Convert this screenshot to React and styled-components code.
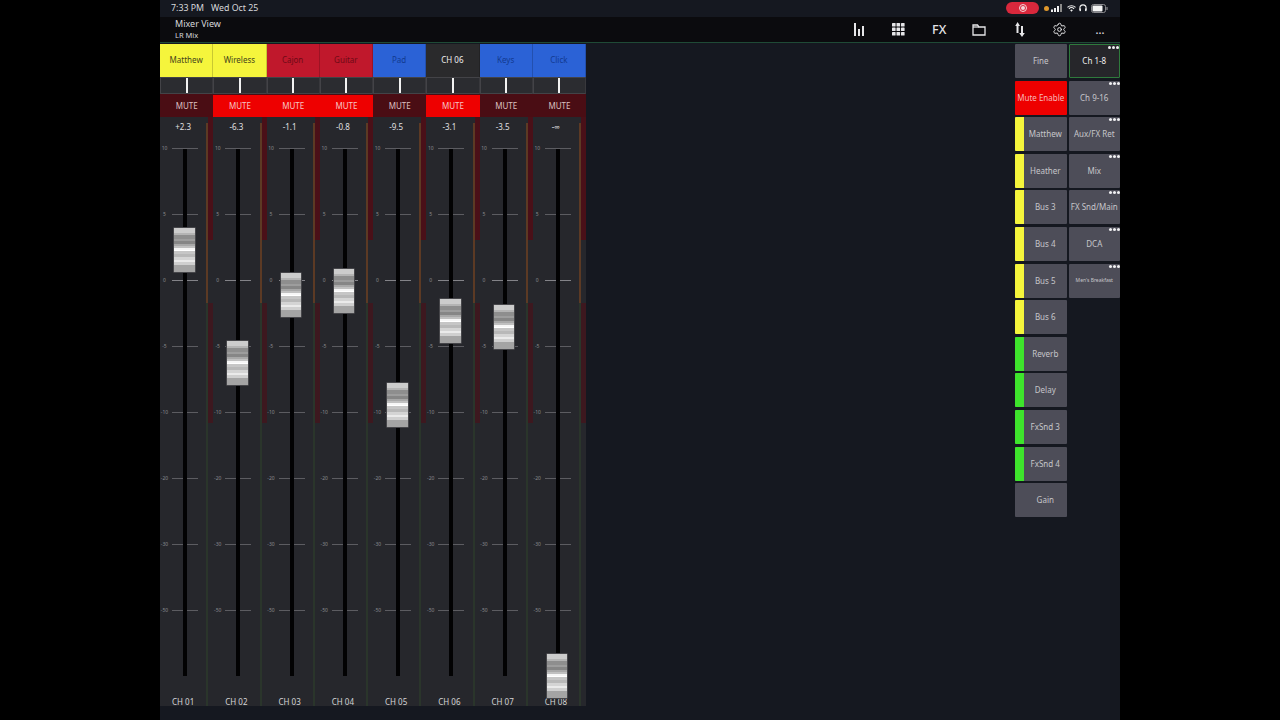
import React from "react";
import styled, { createGlobalStyle } from "styled-components";
import { Settings } from "lucide-react";

const Global = createGlobalStyle`
  html, body { margin: 0; padding: 0; background: #000; }
  #root { width: 1280px; height: 720px; overflow: hidden; }
  * { box-sizing: border-box; }
`;

const Page = styled.div`
  width: 1280px; height: 720px; display: flex; justify-content: center;
  background: #000; font-family: "Noto Sans", "Open Sans", sans-serif;
`;
const Tablet = styled.div`
  width: 960px; height: 720px; display: flex; flex-direction: column; background: #151820;
`;
const StatusBar = styled.div`
  height: 17px; flex: none; display: flex; align-items: center; justify-content: space-between;
  padding: 0 12px 1px 11px; background: #151820; color: #d8d8dc; font-size: 8.8px; font-family: "Noto Sans", sans-serif;
`;
const Clock = styled.div`display: flex; gap: 7px;`;
const StatusIcons = styled.div`display: flex; align-items: center;`;
const RecordPill = styled.div`
  width: 33px; height: 12px; border-radius: 6px; background: #d9283c; display: flex;
  align-items: center; justify-content: center; margin-right: 5px;
`;
const RecordDot = styled.div`
  width: 8px; height: 8px; border-radius: 50%; border: 1px solid #f6d6da; display: flex;
  align-items: center; justify-content: center;
  &::after { content: ""; width: 4px; height: 4px; border-radius: 50%; background: #f6d6da; }
`;
const OrangeDot = styled.div`width: 5px; height: 5px; border-radius: 50%; background: #e0982c; margin-right: 2px;`;
const Header = styled.div`
  height: 26px; flex: none; display: flex; align-items: center; background: #0b0b0e;
  border-bottom: 1px solid #1f4a36; position: relative;
`;
const Titles = styled.div`
  padding-left: 15px; width: 679px; color: #d6d6da; display: flex; flex-direction: column;
`;
const Title = styled.div`font-size: 9px; line-height: 12px; margin-top: -1px;`;
const SubTitle = styled.div`font-size: 7.5px; line-height: 10px;`;
const Tools = styled.div`display: flex; align-items: center; padding-left: 0.5px;`;
const Tool = styled.div`
  width: 40.2px; display: flex; align-items: center; justify-content: center; color: #e2e2e4;
  font-size: 12.5px; font-weight: 500; height: 24px;
`;
const Dots3 = styled(Tool)`font-size: 11px;`;
const Content = styled.div`
  flex: 1; min-height: 0; display: flex; justify-content: space-between; padding-top: 1px;
`;
const Strips = styled.div`width: 426px; height: 662px; display: flex;`;
const Strip = styled.div`flex: 1; min-width: 0; display: flex; flex-direction: column; background: #26272c;`;
const Name = styled.div`
  height: 33px; flex: none; display: flex; align-items: center; justify-content: center; padding-bottom: 2px;
  font-size: 8px; background: ${p => p.$bg}; color: ${p => p.$fg};
  border-right: 1px solid rgba(0,0,0,.18);
`;
const Pan = styled.div`
  height: 17px; flex: none; background: #2b2c30; border: 1px solid #434347; display: flex;
  justify-content: center; border-right-color: #38383c;
`;
const PanMark = styled.div`width: 2px; background: #f2f2f2;`;
const Spacer = styled.div`height: 1px; flex: none; background: #4a0d14;`;
const Mute = styled.div`
  height: 22px; flex: none; display: flex; align-items: center; justify-content: center; padding-bottom: 2px;
  font-size: 8px; background: ${p => p.$on ? "#ee0000" : "#4a0d14"};
  color: ${p => p.$on ? "#f6c4c4" : "#dcc0c0"};
`;
const Body = styled.div`flex: 1; min-height: 0; display: flex;`;
const Fader = styled.div`flex: 1; min-width: 0; position: relative; display: flex; flex-direction: column; align-items: stretch;`;
const Value = styled.div`
  height: 18px; flex: none; display: flex; align-items: center; justify-content: center;
  color: #e0e0e2; font-size: 8px;
`;
const Scale = styled.div`padding-top: 9px; flex: 1;`;
const TickRow = styled.div`height: 66px; display: flex; align-items: flex-start;`;
const TickLabel = styled.div`
  width: 12px; padding-right: 3px; text-align: center; font-size: 5px; line-height: 8px; color: #8a8a8f;
`;
const TickLine = styled.div`width: 26px; height: 1px; margin-top: 4px; background: ${p => p.$bright ? "#838388" : "#5c5c61"};`;
const Track = styled.div`
  position: absolute; top: 32px; left: 23px; width: 4px; height: 527px; background: #020203;
`;
const Knob = styled.div`
  position: absolute; left: 13px; width: 22.5px; height: 46px; border: 1px solid #46464a; border-radius: 1px;
  background: linear-gradient(180deg,
    #cccccc 0 11%, #b4b4b4 11% 16%, #8e8e8e 16% 24%, #9d9d9d 24% 30%, #868686 30% 36%, #a8a8a8 36% 42%,
    #c0c0c0 42% 46%, #f6f6f6 46% 50%, #ffffff 50% 53%, #c6c6c6 53% 60%, #b8b8b8 60% 66%, #d4d4d4 66% 72%,
    #eaeaea 72% 78%, #cfcfcf 78% 83%, #a4a4a4 83% 100%);
`;
const ChannelLabel = styled.div`
  height: 10px; flex: none; text-align: center; font-size: 8px; line-height: 12px; color: #d4d4d6;
`;
const MeterLeft = styled.div`
  width: 2px; flex: none; margin-top: 6px;
  background: linear-gradient(180deg, #5c3a24 0, #5c3a24 180px, #2a352b 180px, #2a352b 100%);
`;
const MeterRight = styled.div`
  width: 5px; flex: none;
  background: linear-gradient(180deg, #4a1018 0, #4a1018 123px, #26272c 123px, #26272c 186px, #3d181f 186px, #3d181f 306px, #26272c 306px);
`;
const Panel = styled.div`display: flex; gap: 2px; width: 105px;`;
const PanelColumn = styled.div`display: flex; flex-direction: column; gap: 2.6px; width: 52px;`;
const PanelButton = styled.div`
  height: 34px; flex: none; display: flex; position: relative; border-radius: 1px; overflow: hidden;
  background: ${p => p.$bg || "#4d4d58"}; color: ${p => p.$fg || "#c6c6ca"};
  border: ${p => p.$outline ? "1px solid #2f7a3c" : "none"};
`;
const Swatch = styled.div`width: 9px; flex: none; background: ${p => p.$color};`;
const ButtonLabel = styled.div`
  flex: 1; min-width: 0; display: flex; align-items: center; justify-content: center; white-space: nowrap; padding-bottom: 1px;
  font-size: ${p => p.$tiny ? "5px" : "8px"};
`;
const Dots = styled.div`position: absolute; top: 1px; right: 0; display: flex; gap: 1px;`;
const Dot = styled.div`width: 3px; height: 3px; border-radius: 50%; background: #f0f0f2;`;

const ticks = ["10", "5", "0", "-5", "-10", "-20", "-30", "-50"];
const strips = [
  { name: "Matthew", bg: "#f5f53c", fg: "#44441a", value: "+2.3", ch: "CH 01", mute: false, top: 110 },
  { name: "Wireless", bg: "#f5f53c", fg: "#44441a", value: "-6.3", ch: "CH 02", mute: true, top: 223 },
  { name: "Cajon", bg: "#c0182c", fg: "#6e0a16", value: "-1.1", ch: "CH 03", mute: true, top: 155 },
  { name: "Guitar", bg: "#c0182c", fg: "#6e0a16", value: "-0.8", ch: "CH 04", mute: true, top: 151 },
  { name: "Pad", bg: "#2b62d6", fg: "#123a90", value: "-9.5", ch: "CH 05", mute: false, top: 265 },
  { name: "CH 06", bg: "#2a2a2c", fg: "#eeeeee", value: "-3.1", ch: "CH 06", mute: true, top: 181 },
  { name: "Keys", bg: "#2b62d6", fg: "#123a90", value: "-3.5", ch: "CH 07", mute: false, top: 187 },
  { name: "Click", bg: "#2b62d6", fg: "#123a90", value: "-∞", ch: "CH 08", mute: false, top: 536 },
];
const Y = "#f5f53c", G = "#3ee42c";
const leftButtons = [
  { label: "Fine", plain: true }, { label: "Mute Enable", bg: "#ee0000", fg: "#f6b8b8", plain: true },
  { label: "Matthew", c: Y }, { label: "Heather", c: Y }, { label: "Bus 3", c: Y }, { label: "Bus 4", c: Y },
  { label: "Bus 5", c: Y }, { label: "Bus 6", c: Y }, { label: "Reverb", c: G }, { label: "Delay", c: G },
  { label: "FxSnd 3", c: G }, { label: "FxSnd 4", c: G }, { label: "Gain", c: "transparent" },
];
const rightButtons = [
  { label: "Ch 1-8", bg: "#26262a", fg: "#f0f0f0", outline: true }, { label: "Ch 9-16" }, { label: "Aux/FX Ret" },
  { label: "Mix" }, { label: "FX Snd/Main" }, { label: "DCA" }, { label: "Men's Breakfast", tiny: true },
];

const BarsIcon = () => (
  <svg width="12" height="13" viewBox="0 0 12 13" fill="#e6e6e8">
    <rect x="1" y="0" width="2" height="13" /><rect x="5" y="6" width="2" height="7" /><rect x="9" y="3" width="2" height="10" />
  </svg>
);
const GridIcon = () => (
  <svg width="13" height="13" viewBox="0 0 13 13" fill="#e6e6e8">
    {[0, 4.5, 9].flatMap(x => [0, 4.5, 9].map(y => <rect key={`${x}-${y}`} x={x} y={y} width="3.6" height="3.6" rx=".6" />))}
  </svg>
);
const FolderIcon = () => (
  <svg width="14" height="12" viewBox="0 0 14 12" fill="none" stroke="#e6e6e8" strokeWidth="1.3">
    <path d="M1 1h4.5l1.5 2h6v8H1z" /><path d="M1 3h6" />
  </svg>
);
const ArrowsIcon = () => (
  <svg width="10" height="15" viewBox="0 0 10 15" fill="#e6e6e8">
    <path d="M2.6 0 5 4H3.5v7h-2V4H.2zM6 4h2v7h1.8L7 15l-2.8-4H6z" />
  </svg>
);
const SignalIcon = () => (
  <svg width="11" height="8" viewBox="0 0 11 8" fill="#f0f0f0" style={{ marginRight: 5 }}>
    <rect x="0" y="5.5" width="2" height="2.5" /><rect x="3" y="4" width="2" height="4" /><rect x="6" y="2" width="2" height="6" /><rect x="9" y="0" width="2" height="8" fill="#8a8a8a" />
  </svg>
);
const WifiIcon = () => (
  <svg width="9" height="7" viewBox="0 0 11 8" fill="none" stroke="#f0f0f0" strokeWidth="1.3" style={{ marginRight: 3 }}>
    <path d="M.6 2.6a7 7 0 0 1 9.8 0M2.3 4.4a4.6 4.6 0 0 1 6.4 0" /><path d="M5.5 8 3.9 6a2.2 2.2 0 0 1 3.2 0z" fill="#f0f0f0" stroke="none" />
  </svg>
);
const PhonesIcon = () => (
  <svg width="8" height="8" viewBox="0 0 9 9" fill="none" stroke="#f0f0f0" strokeWidth="1.2" style={{ marginRight: 4 }}>
    <path d="M1 7V4.5a3.5 3.5 0 0 1 7 0V7" /><rect x=".6" y="5" width="1.6" height="3" fill="#f0f0f0" stroke="none" /><rect x="6.8" y="5" width="1.6" height="3" fill="#f0f0f0" stroke="none" />
  </svg>
);
const BatteryIcon = () => (
  <svg width="17" height="9" viewBox="0 0 17 9" fill="none">
    <rect x=".5" y=".5" width="14" height="8" rx="2" stroke="#8a8a8e" />
    <rect x="1.5" y="1.5" width="10" height="6" rx="1" fill="#f4f4f4" />
    <rect x="15.4" y="3" width="1.2" height="3" rx=".5" fill="#8a8a8e" />
  </svg>
);

export default function App() {
  return (
    <Page>
      <Global />
      <Tablet>
        <StatusBar>
          <Clock><span>7:33 PM</span><span>Wed Oct 25</span></Clock>
          <StatusIcons>
            <RecordPill><RecordDot /></RecordPill>
            <OrangeDot /><SignalIcon /><WifiIcon /><PhonesIcon /><BatteryIcon />
          </StatusIcons>
        </StatusBar>
        <Header>
          <Titles><Title>Mixer View</Title><SubTitle>LR Mix</SubTitle></Titles>
          <Tools>
            <Tool><BarsIcon /></Tool>
            <Tool><GridIcon /></Tool>
            <Tool>FX</Tool>
            <Tool><FolderIcon /></Tool>
            <Tool><ArrowsIcon /></Tool>
            <Tool><Settings size={15} strokeWidth={1.6} /></Tool>
            <Dots3>...</Dots3>
          </Tools>
        </Header>
        <Content>
          <Strips>
            {strips.map(s => (
              <Strip key={s.ch}>
                <Name $bg={s.bg} $fg={s.fg}>{s.name}</Name>
                <Pan><PanMark /></Pan>
                <Spacer />
                <Mute $on={s.mute}>MUTE</Mute>
                <Body>
                  <Fader>
                    <Value>{s.value}</Value>
                    <Scale>
                      {ticks.map(t => (
                        <TickRow key={t}>
                          <TickLabel>{t}</TickLabel>
                          <TickLine $bright={t === "0"} />
                        </TickRow>
                      ))}
                    </Scale>
                    <ChannelLabel>{s.ch}</ChannelLabel>
                    <Track />
                    <Knob style={{ top: s.top }} />
                  </Fader>
                  <MeterLeft />
                  <MeterRight />
                </Body>
              </Strip>
            ))}
          </Strips>
          <Panel>
            <PanelColumn>
              {leftButtons.map(b => (
                <PanelButton key={b.label} $bg={b.bg} $fg={b.fg}>
                  {!b.plain && <Swatch $color={b.c} />}
                  <ButtonLabel>{b.label}</ButtonLabel>
                </PanelButton>
              ))}
            </PanelColumn>
            <PanelColumn>
              {rightButtons.map(b => (
                <PanelButton key={b.label} $bg={b.bg} $fg={b.fg} $outline={b.outline}>
                  <ButtonLabel $tiny={b.tiny}>{b.label}</ButtonLabel>
                  <Dots><Dot /><Dot /><Dot /></Dots>
                </PanelButton>
              ))}
            </PanelColumn>
          </Panel>
        </Content>
      </Tablet>
    </Page>
  );
}
